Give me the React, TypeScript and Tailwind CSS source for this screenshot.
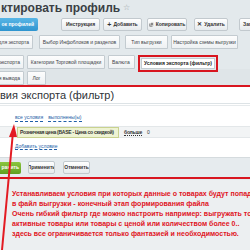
import React from 'react'

const tab = 'h-full shrink-0 flex items-center justify-center whitespace-nowrap overflow-hidden border border-[#c3cbd0] bg-gradient-to-b from-[#fdfdfd] to-[#eef1f3] text-[5px] leading-none text-[#3c4247] rounded-t-[1px]'
const btn = 'h-[13px] shrink-0 flex items-center justify-center whitespace-nowrap overflow-hidden rounded-[2px] border border-[#c2c9ce] bg-gradient-to-b from-white to-[#e6eaed] text-[5px] leading-none text-[#333] font-bold'

export default function App() {
  return (
    <div className="relative w-[250px] h-[250px] overflow-hidden bg-[#e3e9ec] font-['Liberation_Sans',Arial,sans-serif]">
      {/* Title */}
      <div className="h-[16px] flex items-center gap-[3px] pl-[1px] whitespace-nowrap">
        <span className="text-[12px] font-bold text-[#3a3f44] leading-none">ктировать профиль</span>
        <span className="text-[8px] text-[#9aa3a8] leading-none">☆</span>
      </div>

      {/* Toolbar */}
      <div className="mt-[1px] h-[14px] flex items-center">
        <div className="h-[13px] w-[38px] shrink-0 flex items-center justify-end pr-[4px] whitespace-nowrap rounded-r-[2px] bg-gradient-to-b from-[#58b6e6] to-[#2e94cf] text-[5px] leading-none font-bold text-white">ок профилей</div>
        <div className={`${btn} ml-[23px] w-[39px]`}>Инструкция</div>
        <div className={`${btn} ml-[3px] w-[39px] gap-[2px]`}><span className="text-[7px]">+</span>Добавить</div>
        <div className={`${btn} ml-[5px] w-[40px] gap-[2px]`}>
          <svg width="5" height="5" viewBox="0 0 10 10"><rect x="1" y="3" width="6" height="6" fill="#555" /><rect x="3" y="1" width="6" height="6" fill="#888" stroke="#fff" strokeWidth="1" /></svg>
          Копировать
        </div>
        <div className={`${btn} ml-[7px] w-[34px] gap-[2px]`}><span className="text-[6px]">✕</span>Удалить</div>
        <div className={`${btn} ml-[11px] w-[30px] justify-start pl-[3px]`}>Запустить</div>
      </div>

      {/* Tabs row 1 */}
      <div className="mt-[4px] h-[14px] flex">
        <div className={`${tab} w-[35px] -ml-[2px] justify-end pr-[3px]`}>ки для экспорта</div>
        <div className={`${tab} ml-[6px] w-[81px]`}>Выбор Инфоблоков и разделов</div>
        <div className={`${tab} ml-[5px] w-[43px]`}>Тип выгрузки</div>
        <div className={`${tab} ml-[3px] w-[67px]`}>Настройка схемы выгрузки</div>
      </div>

      {/* Tabs row 2 */}
      <div className="mt-[6px] h-[14px] flex items-end">
        <div className={`${tab} w-[26px] -ml-[2px] justify-end pr-[3px]`}>экспорта</div>
        <div className={`${tab} ml-[3px] w-[78px]`}>Категории Торговой площадки</div>
        <div className={`${tab} ml-[3px] w-[27px] justify-start pl-[3px]`}>Валюта</div>
        <div className="ml-[3px] h-[17px] w-[80px] shrink-0 border-2 border-[#d8151f] self-start p-[1px]">
          <div className="h-full bg-white border border-[#c3cbd0] flex items-center justify-center whitespace-nowrap text-[5px] leading-none font-bold text-[#222]">Условия экспорта (фильтр)</div>
        </div>
      </div>

      {/* Tabs row 3 */}
      <div className="h-[16px] pt-[2px] flex bg-[#dfe5e8]">
        <div className={`${tab} w-[26px] -ml-[2px] justify-end pr-[3px]`}>ия вывода</div>
        <div className={`${tab} ml-[3px] w-[19px]`}>Лог</div>
      </div>

      {/* Highlighted content */}
      <div className="border-y-2 border-[#d8151f]">
        <div className="bg-white">
          <div className="h-[17px] flex items-center border-b border-[#dde3e6] text-[11px] text-[#2f3438] leading-none whitespace-nowrap">вия экспорта (фильтр)</div>
          <div className="h-[2px] border-b border-[#e6eaec]" />
          <div className="pl-[15px] pt-[8px] flex gap-[5px] text-[5px] leading-[7px] text-[#1f5fa8] whitespace-nowrap">
            <span className="border-b border-dashed border-[#1f5fa8]">все условия</span>
            <span className="border-b border-dashed border-[#1f5fa8]">выполнены(ы)</span>
          </div>
          <div className="mt-[4px] h-[12px] flex items-center bg-[#f2f4f5] border-y border-[#e3e7e9] whitespace-nowrap">
            <div className="ml-[17px] h-[11px] w-[102px] shrink-0 flex items-center pl-[2px] overflow-hidden bg-[#eef3d3] border border-[#c9d28f] text-[5px] leading-none font-bold tracking-[-0.25px] text-[#333]">Розничная цена (BASE - Цена со скидкой)</div>
            <span className="ml-[5px] text-[5px] leading-[6px] font-bold tracking-[-0.2px] text-[#333] border-b border-dotted border-[#333]">больше</span>
            <span className="ml-[5px] text-[5px] leading-none text-[#333]">0</span>
          </div>
          <div className="pl-[15px] pt-[5px] pb-[7px] text-[5px] leading-[7px] text-[#1f5fa8] whitespace-nowrap">
            <span className="border-b border-dashed border-[#1f5fa8]">Добавить условие</span>
          </div>
        </div>
        <div className="h-[20px] flex items-center bg-[#e6ebee] border-t border-[#d5dbde]">
          <div className="h-[12px] w-[21px] flex items-center justify-end pr-[2px] whitespace-nowrap rounded-r-[2px] bg-gradient-to-b from-[#8cc63f] to-[#5f9e1f] text-[5px] leading-none font-bold text-white">ранить</div>
          <div className={`${btn} ml-[7px] w-[27px] h-[12px]`}>Применить</div>
          <div className={`${btn} ml-[8px] w-[27px] h-[12px]`}>Отменить</div>
        </div>
      </div>

      {/* Annotation */}
      <div className="mt-[1px] h-[72px] bg-[#eceff1] border-b border-[#c9cfd3] pl-[12px] pt-[9px] text-[7px] leading-[10px] font-bold text-[#e0141e] whitespace-nowrap">
        <div>Устанавливаем условия при которых данные о товарах будут попадать</div>
        <div>в файл выгрузки - конечный этап формирования файла</div>
        <div>Очень гибкий фильтр где можно настроить например: выгружать только</div>
        <div>активные товары или товары с ценой или количеством более 0..</div>
        <div>здесь все ограничивается только фантазией и необходимостью.</div>
      </div>

      {/* Arrow */}
      <svg className="absolute left-0 top-0" width="250" height="250" viewBox="0 0 250 250">
        <line x1="2" y1="250" x2="13" y2="132" stroke="#e31b23" strokeWidth="2" />
        <polygon points="14,124 9,137 17,137" fill="#e31b23" />
      </svg>
    </div>
  )
}
